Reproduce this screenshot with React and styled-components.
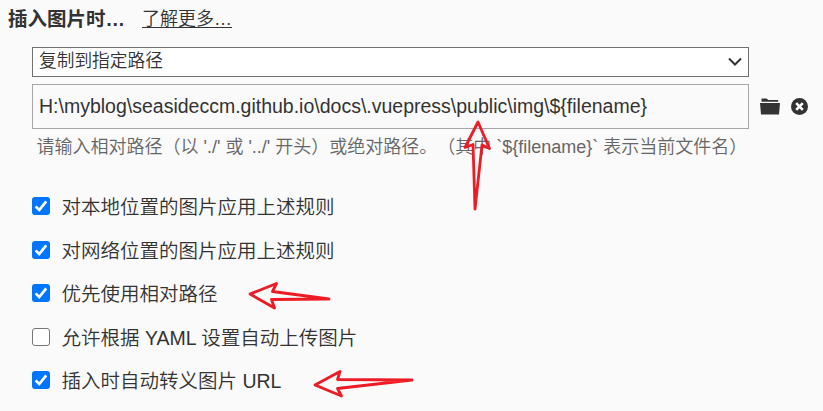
import React from 'react';
import styled, { createGlobalStyle } from 'styled-components';

const Global = createGlobalStyle`
  * { box-sizing: border-box; }
  body {
    margin: 0;
    background: #fafafa;
    color: #333;
    font-family: "Liberation Sans", "Noto Sans CJK SC", sans-serif;
    text-spacing-trim: space-all;
    overflow: hidden;
  }
`;

const Page = styled.main`
  position: relative;
  width: 823px;
  height: 411px;
  background: #fafafa;
  white-space: nowrap;
`;

const Header = styled.header`
  display: flex;
  align-items: center;
  height: 47px;
  padding: 0 0 9px 8px;
`;

const Title = styled.h1`
  width: 134px;
  margin: 0;
  font-size: 19.5px;
  line-height: 28px;
  font-weight: 700;
`;

const MoreLink = styled.a`
  font-size: 18px;
  line-height: 28px;
  font-weight: 350;
  text-decoration: underline;
  text-decoration-thickness: 1px;
  text-underline-offset: 2px;
`;

const Fields = styled.section`
  display: flex;
  flex-direction: column;
  gap: 7px;
  padding-left: 32px;
`;

const SelectBox = styled.div`
  display: flex;
  align-items: center;
  justify-content: space-between;
  width: 717px;
  height: 30px;
  padding: 0 6px 2px;
  border: 1px solid #707070;
  background: #fff;
  font-size: 17.7px;
  font-weight: 350;
  line-height: 26px;
`;

const PathRow = styled.div`
  display: flex;
  align-items: center;
`;

const PathBox = styled.div`
  width: 717px;
  height: 45px;
  margin-right: 11px;
  padding-left: 6px;
  border: 1px solid #a6a6a6;
  font-size: 19.5px;
  line-height: 42px;
`;

const FolderIcon = styled.svg`
  width: 20px;
  height: 17px;
  margin-right: 11px;
`;

const ClearIcon = styled.svg`
  width: 17px;
  height: 17px;
`;

const Hint = styled.p`
  margin: 4px 0 0 36.5px;
  font-size: 18px;
  font-weight: 350;
  line-height: 28px;
  color: #666;
`;

const Options = styled.ul`
  display: flex;
  flex-direction: column;
  margin: 23.5px 0 0;
  padding: 0 0 0 32px;
  list-style: none;
`;

const Option = styled.li`
  display: flex;
  align-items: center;
  gap: 11.5px;
  height: 43.5px;
  font-size: 19.5px;
  font-weight: 350;
  line-height: 28px;
`;

const OptionLabel = styled.span`
  padding-top: 2px;
`;

const Check = styled.span`
  display: flex;
  width: 18px;
  height: 18px;
  border-radius: 3px;
  border: ${p => (p.$on ? 'none' : '1.5px solid #767676')};
  background: ${p => (p.$on ? '#0075ff' : '#fff')};
`;

const Annotations = styled.svg`
  position: absolute;
  inset: 0;
  pointer-events: none;
`;

const options = [
  { label: '对本地位置的图片应用上述规则', on: true },
  { label: '对网络位置的图片应用上述规则', on: true },
  { label: '优先使用相对路径', on: true },
  { label: '允许根据 YAML 设置自动上传图片', on: false },
  { label: '插入时自动转义图片 URL', on: true },
];

export default function App() {
  return (
    <Page>
      <Global />
      <Header>
        <Title>插入图片时…</Title>
        <MoreLink>了解更多…</MoreLink>
      </Header>
      <Fields>
        <SelectBox>
          <span>复制到指定路径</span>
          <svg width="14" height="10" viewBox="0 0 14 10">
            <path d="M1 2.5 7 8.500 13 2.5" fill="none" stroke="#333" strokeWidth="2" />
          </svg>
        </SelectBox>
        <PathRow>
          <PathBox>{'H:\\myblog\\seasideccm.github.io\\docs\\.vuepress\\public\\img\\${filename}'}</PathBox>
          <FolderIcon viewBox="0 0 20 17">
            <path d="M1.5 3.800V1.2Q1.5.5 2.2.5H6.5L8.3 2H17.5Q18.3 2 18.3 2.8V3.800ZM0 5H20L19 16.5H1Z" fill="#333" />
          </FolderIcon>
          <ClearIcon viewBox="0 0 17 17">
            <circle cx="8.5" cy="8.5" r="8.500" fill="#333" />
            <path d="M5.2 5.2 11.8 11.8M11.8 5.2 5.2 11.8" stroke="#fff" strokeWidth="2.6" />
          </ClearIcon>
        </PathRow>
      </Fields>
      <Hint>{"请输入相对路径（以 './' 或 '../' 开头）或绝对路径。（其中 `${filename}` 表示当前文件名）"}</Hint>
      <Options>
        {options.map(o => (
          <Option key={o.label}>
            <Check $on={o.on}>
              {o.on && (
                <svg width="18" height="18" viewBox="0 0 18 18">
                  <path d="M3.6 9.4 7.2 13 14.2 4.4" fill="none" stroke="#fff" strokeWidth="2.7" />
                </svg>
              )}
            </Check>
            <OptionLabel>{o.label}</OptionLabel>
          </Option>
        ))}
      </Options>
      <Annotations width="823" height="411" viewBox="0 0 823 411">
        <g fill="none" stroke="#ed1c24" strokeWidth="2.8" strokeLinejoin="round" strokeLinecap="round">
          <path d="M478 122 465 147.500 473 144.500 475 209 482 145 489.500 148.500Z" />
          <path d="M250 294 276.500 283.500 272.500 291.500 329 299 271.500 299.500 274.500 308Z" />
          <path d="M315 385 340 371.500 337.500 379.500 412 380 337.500 388.500 341.500 396Z" />
        </g>
      </Annotations>
    </Page>
  );
}
